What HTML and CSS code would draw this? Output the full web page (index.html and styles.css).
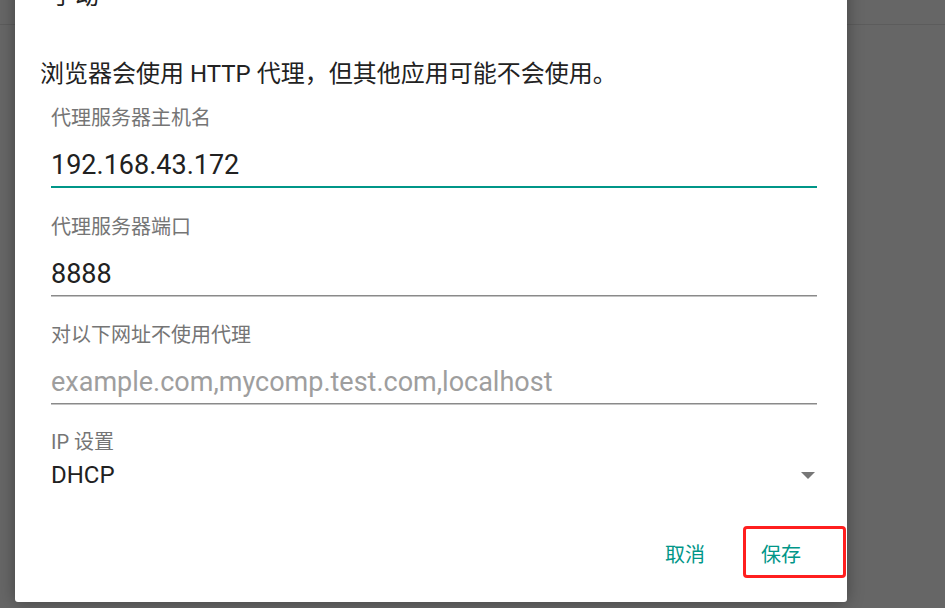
FILE: index.html
```
<!DOCTYPE html>
<html lang="zh-CN">
<head>
<meta charset="utf-8">
<title>代理设置</title>
<link rel="stylesheet" href="styles.css">
</head>
<body>
<div class="dialog">
  <div class="spinner-row">
    <span class="spinner-text">手动</span>
    <span class="caret"></span>
  </div>
  <p class="note">浏览器会使用 HTTP 代理，但其他应用可能不会使用。</p>
  <div class="field">
    <div class="label">代理服务器主机名</div>
    <div class="input focused">192.168.43.172</div>
  </div>
  <div class="field">
    <div class="label">代理服务器端口</div>
    <div class="input">8888</div>
  </div>
  <div class="field">
    <div class="label">对以下网址不使用代理</div>
    <div class="input placeholder">example.com,mycomp.test.com,localhost</div>
  </div>
  <div class="field select-field">
    <div class="label">IP 设置</div>
    <div class="select-row"><span>DHCP</span><span class="caret"></span></div>
  </div>
  <div class="actions">
    <button class="btn">取消</button>
    <button class="btn save">保存</button>
  </div>
</div>
</body>
</html>
```
FILE: styles.css
```
html, body {
  margin: 0;
  padding: 0;
}
body {
  width: 945px;
  height: 608px;
  overflow: hidden;
  background: linear-gradient(to bottom, #666666 0, #666666 24px, #5c5c5c 24px, #5c5c5c 25px, #666666 25px);
  font-family: Roboto, "Noto Sans CJK SC", sans-serif;
}
.dialog {
  margin: -28px 0 0 15px;
  width: 832px;
  height: 630px;
  box-sizing: border-box;
  background: #ffffff;
  border-radius: 0 0 3px 3px;
  box-shadow: 0 0 16px rgba(0, 0, 0, 0.35);
  display: flex;
  flex-direction: column;
}
.spinner-row {
  height: 48px;
  display: flex;
  align-items: center;
  justify-content: space-between;
  padding: 0 32px 0 36px;
}
.spinner-text {
  font-size: 24px;
  color: #212121;
  line-height: 48px;
}
.caret {
  width: 0;
  height: 0;
  border-left: 7px solid transparent;
  border-right: 7px solid transparent;
  border-top: 7px solid #777777;
}
.note {
  margin: 38px 0 0 25px;
  font-size: 24px;
  line-height: 32px;
  color: #222222;
}
.field {
  margin: 16px 30px 0 36px;
}
.field + .field {
  margin-top: 27px;
}
.label {
  font-size: 20px;
  line-height: 24px;
  color: #757575;
}
.input {
  margin-top: 19px;
  font-size: 27px;
  line-height: 32px;
  color: #212121;
  padding-bottom: 5px;
  border-bottom: 1px solid #8a8a8a;
  box-shadow: 0 1px 0 #c4c4c4;
}
.input.focused {
  border-bottom: 2px solid #009688;
  box-shadow: none;
}
.input.placeholder {
  color: #9e9e9e;
}
.select-field {
  margin-right: 32px;
}
.select-field.field {
  margin-top: 26px;
}
.select-row {
  margin-top: 7px;
  display: flex;
  align-items: center;
  justify-content: space-between;
  font-size: 24px;
  line-height: 28px;
  color: #212121;
}
.actions {
  margin-top: 37px;
  display: flex;
  justify-content: flex-end;
  align-items: center;
  padding-right: 1px;
}
.btn {
  font-family: Roboto, "Noto Sans CJK SC", sans-serif;
  font-size: 20px;
  line-height: 24px;
  color: #009688;
  background: none;
  border: 3px solid transparent;
  border-radius: 4px;
  padding: 14px 38px 8px 15px;
  margin: 0;
  cursor: pointer;
}
.btn:first-child {
  padding-right: 35px;
}
.save {
  border-color: #ff1f1f;
  width: 103px;
  height: 52px;
  text-align: left;
}
```
